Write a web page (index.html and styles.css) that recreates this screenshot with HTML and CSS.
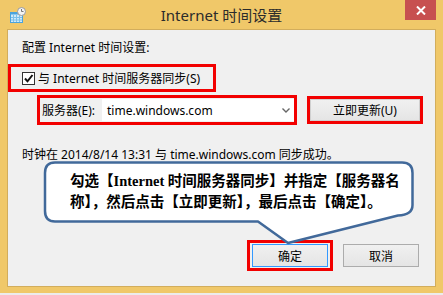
FILE: index.html
```html
<!DOCTYPE html>
<html lang="zh-CN">
<head>
<meta charset="utf-8">
<title>Internet 时间设置</title>
<link rel="stylesheet" href="styles.css">
</head>
<body>
<div class="window">
  <div class="titlebar">
    <svg class="app-icon" width="16" height="16" viewBox="0 0 16 16">
      <rect x="0.5" y="5.5" width="12" height="10" fill="#cfeafa" stroke="#4aa3dd"/>
      <rect x="0.5" y="5.5" width="12" height="2" fill="#4aa3dd"/>
      <path d="M3.5 8v7M6.5 8v7M9.5 8v7M1 10.5h11M1 13h11" stroke="#7cc0ea" stroke-width="1"/>
      <circle cx="11.5" cy="4.5" r="4" fill="#f4f4f4" stroke="#9a9a9a"/>
      <path d="M11.5 2v2.5h2" stroke="#777" stroke-width="1" fill="none"/>
    </svg>
    <div class="title">Internet 时间设置</div>
    <div class="close">
      <svg width="10" height="9" viewBox="0 0 10 9"><path d="M1 0.5l8 8M9 0.5l-8 8" stroke="#fff" stroke-width="2"/></svg>
    </div>
  </div>
  <div class="panel">
    <div class="heading">配置 Internet 时间设置:</div>
    <div class="mark sync">
      <span class="checkbox">
        <svg width="11" height="11" viewBox="0 0 11 11"><path d="M2 5.5l2.5 2.8L9.5 2" stroke="#111" stroke-width="2" fill="none"/></svg>
      </span>
      <span>与 Internet 时间服务器同步(S)</span>
    </div>
    <div class="server-row">
      <div class="mark server">
        <span class="label">服务器(E):</span>
        <div class="combo">
          <span>time.windows.com</span>
          <svg width="8" height="5" viewBox="0 0 8 5"><path d="M0.5 0.5l3.5 3.5 3.5-3.5" stroke="#666" stroke-width="1.4" fill="none"/></svg>
        </div>
      </div>
      <div class="mark update"><button class="btn">立即更新(U)</button></div>
    </div>
    <div class="status">时钟在 2014/8/14 13:31 与 time.windows.com 同步成功。</div>
    <div class="actions">
      <div class="mark ok"><button class="btn default">确定</button></div>
      <button class="btn">取消</button>
    </div>
  </div>
  <div class="callout">
    <svg class="callout-shape" width="380" height="90" viewBox="0 0 380 90">
      <path d="M15 4.5H362Q372.5 4.5 372.5 15V47Q372.5 57 358 57.5L248 85L218 63.5H15Q5 63.5 5 53V15Q5 4.5 15 4.5Z" fill="#fff" stroke="#41699a" stroke-width="2.5" stroke-linejoin="round"/>
    </svg>
    <p class="callout-text">勾选【Internet 时间服务器同步】并指定【服务器名<br>称】，然后点击【立即更新】，最后点击【确定】。</p>
  </div>
</div>
</body>
</html>
```
FILE: styles.css
```css
* { box-sizing: border-box; margin: 0; }
html, body { margin: 0; padding: 0; }
body {
  width: 443px;
  height: 295px;
  overflow: hidden;
  background: #ececec;
  font-family: "Noto Sans", "Noto Sans CJK SC", sans-serif;
  font-size: 12px;
  color: #000;
}
.window {
  position: relative;
  width: 443px;
  height: 293px;
  background: #f0c869;
  padding: 0 7px 6px;
  display: flex;
  flex-direction: column;
}
.titlebar {
  height: 29px;
  display: grid;
  grid-template-columns: 1fr auto 1fr;
  align-items: start;
}
.app-icon { margin: 7px 0 0 3px; display: block; }
.title {
  font-size: 15px;
  line-height: 30px;
  color: #2b2b2b;
}
.close {
  justify-self: end;
  width: 31px;
  height: 20px;
  background: #c75050;
  display: flex;
  align-items: center;
  justify-content: center;
}
.panel {
  flex: 1;
  background: #f0f0f0;
  border: 1px solid #d2ad5c;
  display: flex;
  flex-direction: column;
}
.heading { margin: 10px 0 0 14px; line-height: 16px; }
.mark { border: 3px solid #f20000; }
.sync {
  margin-top: 8px;
  width: 208px;
  height: 28px;
  display: flex;
  align-items: center;
  padding-left: 11px;
  gap: 3px;
}
.checkbox {
  width: 13px;
  height: 13px;
  border: 1px solid #333;
  background: #fff;
  display: flex;
  align-items: center;
  justify-content: center;
}
.server-row {
  display: flex;
  align-items: center;
  gap: 10px;
  margin: 3px 0 0 29px;
}
.server {
  display: flex;
  align-items: center;
  width: 260px;
  height: 30px;
  padding: 1px 0 1px 2px;
}
.label { width: 60px; }
.combo {
  flex: 1;
  height: 22px;
  background: #fff;
  display: flex;
  align-items: center;
  justify-content: space-between;
  padding: 0 4px 0 5px;
}
.update { width: 116px; height: 28px; }
.btn {
  font: inherit;
  color: #000;
  background: linear-gradient(#f0f0f0, #e5e5e5);
  border: 1px solid #acacac;
  padding: 0;
}
.update .btn { width: 110px; height: 22px; border-color: #d0d0d0; }
.status { margin: 22px 0 0 14px; line-height: 16px; }
.actions {
  margin-top: auto;
  display: flex;
  justify-content: flex-end;
  align-items: center;
  gap: 10px;
  padding: 0 16px 15px 0;
}
.ok { padding: 1px 2px; }
.btn.default { border-color: #3399ff; }
.actions .btn { width: 76px; height: 23px; }
.callout {
  position: absolute;
  left: 40px;
  top: 158px;
  width: 380px;
  height: 90px;
}
.callout-shape { display: block; }
.callout-text {
  position: absolute;
  left: 30px;
  top: 13px;
  white-space: nowrap;
  font-family: "Liberation Serif", "Noto Sans CJK SC", serif;
  font-weight: 700;
  font-size: 14.5px;
  line-height: 21px;
  color: #000;
}
```
